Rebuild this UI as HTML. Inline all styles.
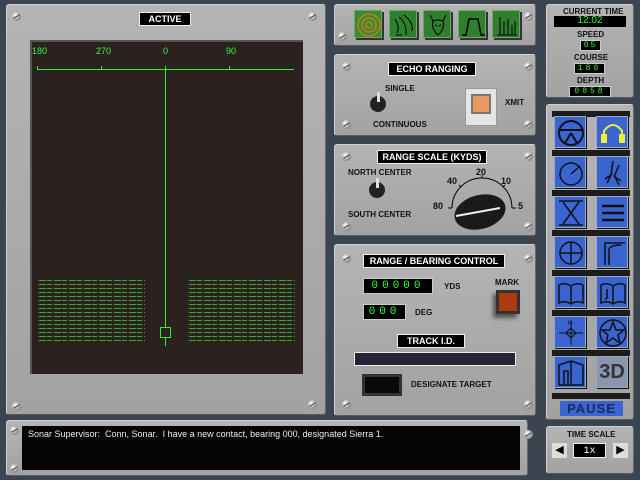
<!DOCTYPE html>
<html><head><style>
*{margin:0;padding:0;box-sizing:border-box}
body{width:640px;height:480px;background:#3b4550;position:relative;overflow:hidden;font-family:"Liberation Sans",sans-serif}
.p{position:absolute;background:linear-gradient(180deg,#b4b4b4,#a2a2a2);border:1px solid #d0d0d0;border-right-color:#6a6a6a;border-bottom-color:#5a5a5a;border-radius:3px}
.a{position:absolute}
.lbl{position:absolute;background:#000;color:#fff;font-weight:bold;font-size:9px;text-align:center;line-height:12px;border:1px solid #eee}
.t{position:absolute;font-size:8px;font-weight:bold;color:#111}
.scr{position:absolute;width:9px;height:9px;border-radius:50%;background:radial-gradient(circle at 35% 35%,#fff,#aaa 50%,#555);}
.scr:after{content:"";position:absolute;left:1px;top:4px;width:7px;height:1px;background:#333;transform:rotate(-30deg)}
.g{position:absolute;width:28px;height:28px;background:#2f7f2f;border:1px solid #6a6;box-shadow:2px 2px 0 #333}
.b{position:absolute;width:32px;height:32px;background:#3a64d0;border:1px solid #9ab;box-shadow:1px 1px 0 #111}
.bar{position:absolute;left:552px;width:78px;height:6px;background:#1c1c1c}
.d{position:absolute;background:#000;color:#3f3;font-family:"Liberation Mono",monospace;font-size:9px;text-align:center;border:1px solid #ccc;letter-spacing:2px}
.sl{position:absolute;top:46px;color:#4e4;font-size:9px}
.noise{position:absolute;background:repeating-linear-gradient(90deg,rgba(43,34,32,.9) 0 2px,transparent 2px 9px,rgba(43,34,32,.9) 9px 10px,transparent 10px 15px),repeating-linear-gradient(180deg,#3c3 0 1px,transparent 1px 4px);opacity:.8}
</style></head><body>
<div class="p" style="left:6px;top:4px;width:320px;height:411px"></div>
<div class="lbl" style="left:139px;top:12px;width:52px">ACTIVE</div>
<div class="scr" style="left:12px;top:12px"></div><div class="scr" style="left:308px;top:12px"></div>
<div class="scr" style="left:12px;top:402px"></div><div class="scr" style="left:308px;top:400px"></div>
<div class="a" style="left:30px;top:40px;width:273px;height:334px;background:#2b2220;border-top:2px solid #555;border-left:2px solid #555"></div>
<div class="sl" style="left:32px">180</div>
<div class="sl" style="left:96px">270</div>
<div class="sl" style="left:163px">0</div>
<div class="sl" style="left:226px">90</div>
<div class="a" style="left:37px;top:69px;width:257px;height:1px;background:#3e3"></div>
<div class="a" style="left:37px;top:66px;width:1px;height:4px;background:#3e3"></div>
<div class="a" style="left:101px;top:66px;width:1px;height:4px;background:#3e3"></div>
<div class="a" style="left:229px;top:66px;width:1px;height:4px;background:#3e3"></div>
<div class="a" style="left:165px;top:66px;width:1px;height:280px;background:#3e3"></div>
<div class="a" style="left:160px;top:327px;width:11px;height:11px;border:1px solid #3e3;background:#2b2220"></div>
<div class="noise" style="left:37px;top:280px;width:108px;height:64px"></div>
<div class="noise" style="left:187px;top:280px;width:108px;height:64px"></div>
<div class="p" style="left:6px;top:420px;width:522px;height:56px"></div>
<div class="a" style="left:22px;top:426px;width:498px;height:44px;background:#050305"></div>
<div class="a" style="left:28px;top:429px;color:#eee;font-size:9px;white-space:pre">Sonar Supervisor:  Conn, Sonar.  I have a new contact, bearing 000, designated Sierra 1.</div>
<div class="scr" style="left:10px;top:426px"></div><div class="scr" style="left:10px;top:464px"></div><div class="scr" style="left:524px;top:430px"></div>
<div class="p" style="left:334px;top:4px;width:202px;height:42px"></div>
<div class="g" style="left:354px;top:10px;background:#3a8a2f"><svg width="28" height="28"><circle cx="14" cy="14" r="11" fill="none" stroke="#c77a20" stroke-width="1.5"/><circle cx="14" cy="14" r="7" fill="none" stroke="#c77a20" stroke-width="1.5"/><circle cx="14" cy="14" r="3" fill="none" stroke="#c77a20" stroke-width="1.5"/></svg></div>
<div class="g" style="left:389px;top:10px"><svg width="28" height="28" fill="none" stroke="#000"><path d="M5 8 Q10 16 7 22M9 6 Q17 12 16 24M14 4 Q24 12 22 20M6 24 H12"/></svg></div>
<div class="g" style="left:423px;top:10px"><svg width="28" height="28" fill="none" stroke="#000"><path d="M6 4 L9 10 Q14 8 19 10 L22 4 M9 10 Q7 18 14 24 Q21 18 19 10 M11 14 L13 15 M17 14 L15 15"/></svg></div>
<div class="g" style="left:458px;top:10px"><svg width="28" height="28" fill="none" stroke="#000" stroke-width="1.5"><path d="M3 24 H7 L10 8 H19 L22 24 H26"/></svg></div>
<div class="g" style="left:492px;top:10px"><svg width="28" height="28" fill="none" stroke="#000"><path d="M4 24 H24 M7 24 V6 M11 24 V10 M15 24 V8 M19 24 V14 M22 24 V10"/></svg></div>
<div class="scr" style="left:338px;top:32px"></div><div class="scr" style="left:524px;top:12px"></div>
<div class="p" style="left:334px;top:54px;width:202px;height:82px"></div>
<div class="lbl" style="left:388px;top:62px;width:88px">ECHO RANGING</div>
<div class="t" style="left:385px;top:84px">SINGLE</div>
<div class="a" style="left:370px;top:96px;width:16px;height:16px;border-radius:50%;background:#222"></div>
<div class="a" style="left:377px;top:92px;width:3px;height:10px;background:#ddd"></div>
<div class="t" style="left:373px;top:120px">CONTINUOUS</div>
<div class="a" style="left:465px;top:88px;width:32px;height:38px;background:#e4e4e4;border:1px solid #999"></div>
<div class="a" style="left:471px;top:94px;width:20px;height:20px;background:#e89860;border:2px solid #777"></div>
<div class="t" style="left:505px;top:98px">XMIT</div>
<div class="scr" style="left:342px;top:62px"></div><div class="scr" style="left:524px;top:62px"></div>
<div class="scr" style="left:342px;top:120px"></div><div class="scr" style="left:524px;top:120px"></div>
<div class="p" style="left:334px;top:144px;width:202px;height:92px"></div>
<div class="lbl" style="left:377px;top:150px;width:110px">RANGE SCALE (KYDS)</div>
<div class="t" style="left:348px;top:168px">NORTH CENTER</div>
<div class="a" style="left:369px;top:182px;width:16px;height:16px;border-radius:50%;background:#222"></div>
<div class="a" style="left:376px;top:178px;width:3px;height:10px;background:#ddd"></div>
<div class="t" style="left:348px;top:210px">SOUTH CENTER</div>
<svg class="a" style="left:430px;top:162px" width="100" height="74"><path d="M22 46 A30 30 0 0 1 82 46" fill="none" stroke="#000"/><path d="M18 46 H22 M82 46 H86 M52 16 V13 M31 25 L29 23 M73 25 L75 23" stroke="#000"/><ellipse cx="50" cy="50" rx="26" ry="17" fill="#1a1a1a" transform="rotate(-15 50 50)"/><line x1="26" y1="54" x2="70" y2="46" stroke="#eee" stroke-width="2"/></svg>
<div class="t" style="left:447px;top:176px;font-size:9px">40</div>
<div class="t" style="left:476px;top:167px;font-size:9px">20</div>
<div class="t" style="left:501px;top:176px;font-size:9px">10</div>
<div class="t" style="left:433px;top:201px;font-size:9px">80</div>
<div class="t" style="left:518px;top:201px;font-size:9px">5</div>
<div class="scr" style="left:342px;top:152px"></div><div class="scr" style="left:524px;top:152px"></div>
<div class="scr" style="left:342px;top:222px"></div><div class="scr" style="left:524px;top:222px"></div>
<div class="p" style="left:334px;top:244px;width:202px;height:172px"></div>
<div class="lbl" style="left:363px;top:254px;width:142px">RANGE / BEARING CONTROL</div>
<div class="d" style="left:363px;top:278px;width:70px;height:16px;font-size:11px;line-height:14px;letter-spacing:4px">00000</div>
<div class="t" style="left:444px;top:282px">YDS</div>
<div class="d" style="left:363px;top:304px;width:43px;height:16px;font-size:11px;line-height:14px;letter-spacing:4px">000</div>
<div class="t" style="left:415px;top:308px">DEG</div>
<div class="t" style="left:495px;top:278px">MARK</div>
<div class="a" style="left:496px;top:290px;width:24px;height:24px;background:#b03a10;border:3px solid #333;box-shadow:-3px 4px 4px #555"></div>
<div class="lbl" style="left:397px;top:334px;width:68px">TRACK I.D.</div>
<div class="a" style="left:354px;top:352px;width:162px;height:14px;background:#252535;border:1px solid #eee"></div>
<div class="a" style="left:362px;top:374px;width:40px;height:22px;background:#0a0a0a;border:3px solid #333"></div>
<div class="t" style="left:411px;top:380px">DESIGNATE TARGET</div>
<div class="scr" style="left:342px;top:254px"></div><div class="scr" style="left:524px;top:254px"></div>
<div class="scr" style="left:342px;top:400px"></div><div class="scr" style="left:524px;top:400px"></div>
<div class="p" style="left:546px;top:4px;width:88px;height:94px"></div>
<div class="t" style="left:563px;top:7px">CURRENT TIME</div>
<div class="d" style="left:554px;top:16px;width:72px;height:11px;font-size:10px;line-height:10px;letter-spacing:0;border:none;font-family:'Liberation Sans',sans-serif">12:02</div>
<div class="t" style="left:577px;top:30px">SPEED</div>
<div class="d" style="left:580px;top:40px;width:21px;height:11px;font-size:8px;line-height:9px">05</div>
<div class="t" style="left:574px;top:53px">COURSE</div>
<div class="d" style="left:574px;top:63px;width:31px;height:11px;font-size:8px;line-height:9px;letter-spacing:3px">180</div>
<div class="t" style="left:577px;top:76px">DEPTH</div>
<div class="d" style="left:569px;top:86px;width:42px;height:11px;font-size:8px;line-height:9px;letter-spacing:3px">0058</div>
<div class="p" style="left:546px;top:104px;width:88px;height:316px"></div>
<div class="bar" style="top:111px"></div><div class="bar" style="top:150px"></div><div class="bar" style="top:190px"></div><div class="bar" style="top:230px"></div><div class="bar" style="top:270px"></div><div class="bar" style="top:310px"></div><div class="bar" style="top:350px"></div><div class="bar" style="top:393px"></div>
<div class="b" style="left:554px;top:116px"><svg width="32" height="32" fill="none" stroke="#111" stroke-width="2"><circle cx="16" cy="16" r="12"/><path d="M5 13 H27 M16 16 L10 26 M16 16 L22 26"/></svg></div>
<div class="b" style="left:596px;top:116px"><svg width="32" height="32" fill="none" stroke="#ee3" stroke-width="2"><path d="M7 22 V14 Q16 2 25 14 V22"/><rect x="5" y="18" width="4" height="7" fill="#ee3"/><rect x="23" y="18" width="4" height="7" fill="#ee3"/></svg></div>
<div class="b" style="left:554px;top:156px"><svg width="32" height="32" fill="none" stroke="#111" stroke-width="1.5"><circle cx="16" cy="17" r="11"/><path d="M16 17 L25 9"/></svg></div>
<div class="b" style="left:596px;top:156px"><svg width="32" height="32" fill="none" stroke="#111" stroke-width="1.5"><path d="M16 4 L14 18 M22 8 L17 20 M8 22 L14 18 L10 26 M24 24 L18 20 L22 28"/></svg></div>
<div class="b" style="left:554px;top:196px"><svg width="32" height="32" fill="none" stroke="#111" stroke-width="1.5"><path d="M4 4 H28 M4 28 H28 M8 5 L24 27 M24 5 L8 27"/></svg></div>
<div class="b" style="left:596px;top:196px"><svg width="32" height="32" stroke="#111" stroke-width="2.5"><path d="M5 9 H27 M5 16 H27 M5 23 H27"/></svg></div>
<div class="b" style="left:554px;top:236px"><svg width="32" height="32" fill="none" stroke="#111" stroke-width="1.5"><circle cx="16" cy="16" r="11"/><path d="M5 16 H27 M16 5 V27"/></svg></div>
<div class="b" style="left:596px;top:236px"><svg width="32" height="32" fill="none" stroke="#111" stroke-width="1.5"><path d="M8 28 V6 H28 M12 28 V12 Q14 8 24 8"/></svg></div>
<div class="b" style="left:554px;top:276px"><svg width="32" height="32" fill="none" stroke="#111" stroke-width="1.5"><path d="M4 8 Q10 5 16 9 Q22 5 28 8 V26 Q22 23 16 27 Q10 23 4 26 Z M16 9 V27"/></svg></div>
<div class="b" style="left:596px;top:276px"><svg width="32" height="32" fill="none" stroke="#111" stroke-width="1.5"><path d="M4 8 Q10 5 16 9 Q22 5 28 8 V26 Q22 23 16 27 Q10 23 4 26 Z M16 9 V27 M10 12 V20 Q10 22 8 22"/></svg></div>
<div class="b" style="left:554px;top:316px"><svg width="32" height="32" fill="none" stroke="#111"><path d="M16 4 V28 M4 16 H28 M16 11 L21 16 L16 21 L11 16 Z"/><text x="13" y="8" font-size="6" fill="#111" stroke="none">N</text></svg></div>
<div class="b" style="left:596px;top:316px"><svg width="32" height="32" fill="none" stroke="#111" stroke-width="1.5"><circle cx="16" cy="16" r="13"/><path d="M16 5 L19 13 L27 13 L21 18 L23 26 L16 21 L9 26 L11 18 L5 13 L13 13 Z"/></svg></div>
<div class="b" style="left:554px;top:356px"><svg width="32" height="32" fill="none" stroke="#111" stroke-width="1.5"><path d="M4 8 L16 4 L28 8 V28 H4 Z M16 4 V28 M9 28 V14 H13 V28"/></svg></div>
<div class="b" style="left:596px;top:356px;background:#8b95b0"><div style="font-size:20px;font-weight:bold;color:#333;text-align:center;line-height:30px">3D</div></div>
<div class="a" style="left:560px;top:401px;width:63px;height:15px;background:#3a64d0;color:#1a2a60;font-weight:bold;font-size:13px;text-align:center;line-height:15px;letter-spacing:1px">PAUSE</div>
<div class="p" style="left:546px;top:426px;width:88px;height:48px"></div>
<div class="t" style="left:567px;top:430px">TIME SCALE</div>
<div class="a" style="left:552px;top:443px;width:15px;height:15px;background:#ddd;font-size:11px;line-height:15px;text-align:center">◀</div>
<div class="a" style="left:573px;top:443px;width:33px;height:15px;background:#000;color:#fff;font-family:'Liberation Mono',monospace;font-size:10px;line-height:15px;text-align:center;border:1px solid #eee">1x</div>
<div class="a" style="left:613px;top:443px;width:15px;height:15px;background:#ddd;font-size:11px;line-height:15px;text-align:center">▶</div>
</body></html>
